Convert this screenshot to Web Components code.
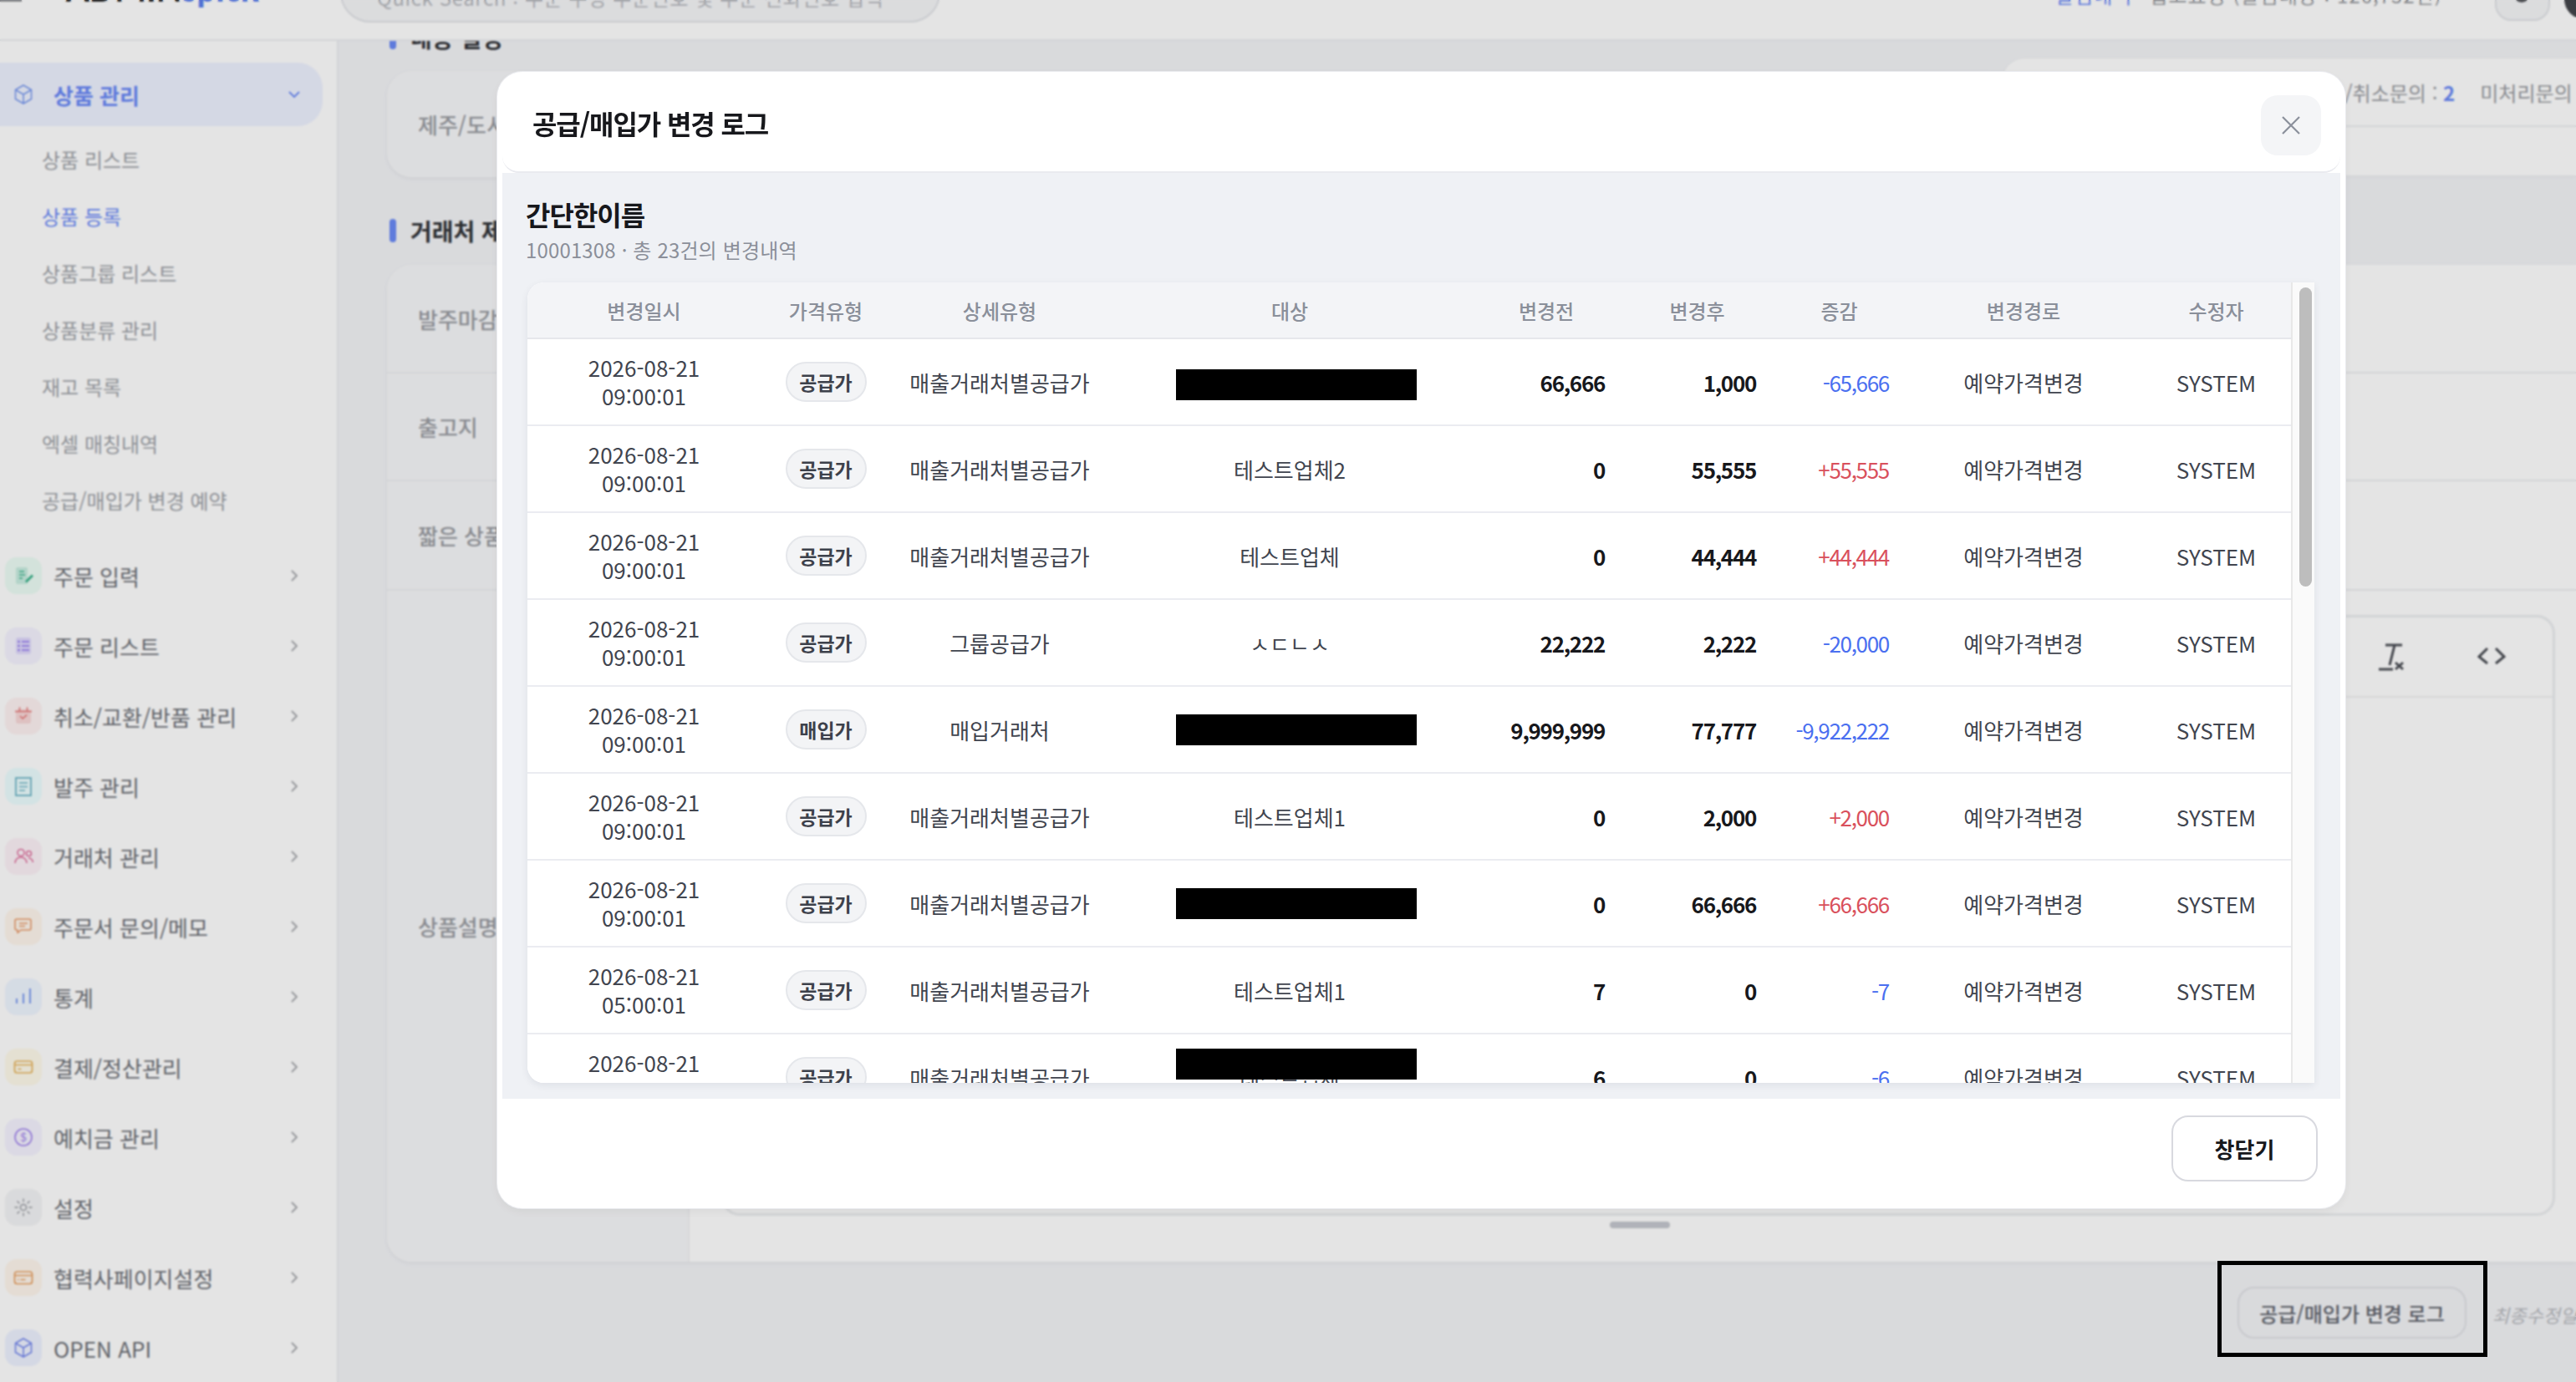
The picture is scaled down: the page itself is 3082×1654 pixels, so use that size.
<!DOCTYPE html>
<html lang="ko">
<head>
<meta charset="utf-8">
<title>공급/매입가 변경 로그</title>
<style>
    html, body {
        margin: 0;
        height: 100%;
        overflow: hidden;
        font-family: "Noto Sans CJK KR", "Noto Sans", sans-serif;
    }
</style>
</head>
<body>
<app-shell>
    <top-bar slot="top"></top-bar>
    <side-nav slot="nav"></side-nav>
    <page-main slot="main"></page-main>
    <dim-layer slot="over">
        <log-modal></log-modal>
    </dim-layer>
    <mark-box slot="over"></mark-box>
</app-shell>

<script>
const ICONS = {
    cube: `<path d="M22 11l9.5 5.5v11L22 33l-9.5-5.5v-11z M12.5 16.5L22 22l9.5-5.5 M22 22v11" fill="none" stroke="currentColor" stroke-width="1.6" stroke-linejoin="round"/>`,
    edit: `<rect x="13" y="12" width="14" height="20" rx="2" fill="currentColor" opacity=".2"/><path d="M17 17h6 M17 21h7 M17 25h4" stroke="currentColor" stroke-width="1.4"/><path d="M25 29.500l8-8" stroke="currentColor" stroke-width="3"/>`,
    list: `<rect x="13" y="12" width="18" height="20" rx="3" fill="currentColor" opacity=".2"/><path d="M20 17h9 M20 22h9 M20 27h9" stroke="currentColor" stroke-width="1.4"/><circle cx="16.500" cy="17" r="1.300" fill="currentColor"/><circle cx="16.500" cy="22" r="1.300" fill="currentColor"/><circle cx="16.500" cy="27" r="1.300" fill="currentColor"/>`,
    calendar: `<rect x="13" y="14" width="18" height="17" rx="3" fill="currentColor" opacity=".2"/><path d="M12 16.500h20 M17.500 11.500v4 M26.500 11.500v4 M18 22l3.200 3 5-4.500" fill="none" stroke="currentColor" stroke-width="1.500"/>`,
    doc: `<rect x="13" y="12" width="18" height="21" fill="none" stroke="currentColor" stroke-width="1.800"/><path d="M17 18h10 M17 22.500h10 M17 27h7" stroke="currentColor" stroke-width="1.400"/>`,
    people: `<circle cx="19" cy="17.500" r="4" fill="none" stroke="currentColor" stroke-width="1.600"/><circle cx="28.500" cy="18.500" r="3" fill="none" stroke="currentColor" stroke-width="1.600"/><path d="M12 30c.5-5 3.500-7 7-7s6.500 2 7 7 M28 24c3 0 5 2 5.500 5" fill="none" stroke="currentColor" stroke-width="1.600"/>`,
    chat: `<path d="M14 13h15a2 2 0 0 1 2 2v9a2 2 0 0 1-2 2H19l-4 3.500V26h-1a2 2 0 0 1-2-2v-9a2 2 0 0 1 2-2z" fill="none" stroke="currentColor" stroke-width="1.600" stroke-linejoin="round"/><path d="M17 18h10 M17 21.500h7" stroke="currentColor" stroke-width="1.400"/>`,
    bars: `<path d="M14 30v-6 M22 30v-12 M30 30v-18" stroke="currentColor" stroke-width="2"/>`,
    card: `<rect x="11.500" y="15" width="21" height="14" rx="3" fill="none" stroke="currentColor" stroke-width="1.700"/><path d="M11.500 19.500h21 M15.500 24.500h4" stroke="currentColor" stroke-width="1.500"/>`,
    coin: `<circle cx="22" cy="22" r="10" fill="none" stroke="currentColor" stroke-width="1.600"/><text x="22" y="27" text-anchor="middle" font-size="14" font-family="Lato, sans-serif" fill="currentColor">$</text>`,
    sun: `<circle cx="22" cy="22" r="3.600" fill="none" stroke="currentColor" stroke-width="1.500"/><path d="M22 11.500v4 M22 28.500v4 M11.500 22h4 M28.500 22h4 M14.500 14.500l2.800 2.800 M26.700 26.700l2.800 2.800 M14.500 29.500l2.800-2.800 M26.700 17.300l2.800-2.800" stroke="currentColor" stroke-width="1.400"/>`,
    bill: `<rect x="11.500" y="15" width="21" height="14.500" rx="3" fill="none" stroke="currentColor" stroke-width="1.700"/><path d="M11.500 19.500h21 M15 24.500h1.500 M18.500 24.500h6" stroke="currentColor" stroke-width="1.500"/>`
};

class AppShell extends HTMLElement {
    constructor() {
        super();
        this.shadowDOM = this.attachShadow({mode: "open"});
        this.shadowDOM.innerHTML = `
        <style>
            :host {
                display: grid;
                grid-template-columns: 405px 1fr;
                grid-template-rows: 49px 1fr;
                width: 3082px;
                height: 1654px;
                overflow: hidden;
                position: relative;
                background: #f3f4f7;
            }
            ::slotted([slot="top"]) { grid-column: 1 / 3; }
        </style>
        <slot name="top"></slot>
        <slot name="nav"></slot>
        <slot name="main"></slot>
        <slot name="over"></slot>`;
    }
}

class TopBar extends HTMLElement {
    constructor() {
        super();
        this.shadowDOM = this.attachShadow({mode: "open"});
        this.shadowDOM.innerHTML = `
        <style>
            :host {
                display: flex;
                position: relative;
                z-index: 2;
                height: 49px;
                box-sizing: border-box;
                background: #fff;
                border-bottom: 2px solid #eceef1;
                overflow: hidden;
                align-items: flex-start;
            }
            .burger { width: 26px; height: 2px; background: #8d8f94; flex: none; }
            .logo {
                margin: -37px 0 0 53px;
                width: 328px;
                flex: none;
                font: 700 40px/48px Lato, sans-serif;
                color: #222;
                white-space: nowrap;
            }
            .logo b { color: #5b7fee; }
            .search {
                flex: none;
                width: 718px;
                height: 62px;
                margin-top: -35px;
                box-sizing: border-box;
                padding: 0 42px;
                background: #f5f6f8;
                border: 2px solid #e2e4e8;
                border-radius: 0 0 36px 36px;
                font-size: 24px;
                line-height: 60px;
                letter-spacing: 0.6px;
                color: #b7b9be;
                white-space: nowrap;
                overflow: hidden;
            }
            .notice {
                flex: none;
                margin: -22px 0 0 1334px;
                width: 493px;
                font-size: 24px;
                line-height: 32px;
                letter-spacing: 1px;
                color: #9b9da2;
                white-space: nowrap;
            }
            .notice span { color: #6b8af7; margin-right: 20px; }
            .tool {
                flex: none;
                width: 66px;
                height: 62px;
                margin: -37px 0 0 33px;
                box-sizing: border-box;
                background: #f5f6f8;
                border: 2px solid #e2e4e8;
                border-radius: 20px;
                position: relative;
            }
            .tool i {
                position: absolute;
                left: 20px;
                top: 18px;
                width: 20px;
                height: 20px;
                box-sizing: border-box;
                border: 3px solid #55575c;
                border-radius: 50%;
            }
            .avatar {
                flex: none;
                width: 66px;
                height: 60px;
                margin: -37px 0 0 17px;
                background: #44454a;
                border-radius: 24px;
            }
        </style>
        <div class="burger"></div>
        <div class="logo">ADMIN<b>spick</b></div>
        <div class="search">Quick Search : 주문 수정 주문번호 및 주문 전화번호 입력</div>
        <div class="notice"><span>알림내역</span>입고요청 (알림대상 : 126,752건)</div>
        <div class="tool"><i></i></div>
        <div class="avatar"></div>`;
    }
}

class NavItem extends HTMLElement {
    constructor() {
        super();
        this.shadowDOM = this.attachShadow({mode: "open"});
    }

    connectedCallback() {
        const active = this.hasAttribute("active");
        const tint = this.getAttribute("tint");
        const ink = this.getAttribute("ink");
        this.shadowDOM.innerHTML = `
        <style>
            :host {
                display: flex;
                align-items: center;
                width: 386px;
                height: ${active ? 76 : 84}px;
                box-sizing: border-box;
                padding-left: 6px;
                border-radius: 0 30px 30px 0;
                background: ${active ? "#eef2ff" : "transparent"};
                color: ${active ? "#6b8af7" : "#6d7077"};
                font-size: 26px;
                font-weight: ${active ? 700 : 400};
            }
            .box {
                flex: none;
                width: 44px;
                height: 44px;
                margin-right: 14px;
                border-radius: 14px;
                background: ${tint};
                color: ${ink};
            }
            svg { display: block; }
            .label { flex: 1; white-space: nowrap; }
            .chev { flex: none; margin-right: 26px; color: ${active ? "#6b8af7" : "#a6a8ad"}; }
        </style>
        <div class="box"><svg width="44" height="44" viewBox="0 0 44 44">${ICONS[this.getAttribute("icon")]}</svg></div>
        <span class="label"><slot></slot></span>
        <svg class="chev" width="16" height="16" viewBox="0 0 16 16" fill="none" stroke="currentColor" stroke-width="1.800">
            <path d="${active ? "M2 5l6 6 6-6" : "M5 2l6 6-6 6"}"/>
        </svg>`;
    }
}

class SubItem extends HTMLElement {
    constructor() {
        super();
        this.shadowDOM = this.attachShadow({mode: "open"});
        this.shadowDOM.innerHTML = `
        <style>
            :host {
                display: flex;
                align-items: center;
                height: 68px;
                padding-left: 50px;
                font-size: 24px;
                color: #a0a3a9;
            }
            :host([current]) { color: #6b8af7; }
        </style>
        <slot></slot>`;
    }
}

class SideNav extends HTMLElement {
    constructor() {
        super();
        this.shadowDOM = this.attachShadow({mode: "open"});
        const subs = ["상품 리스트", "상품 등록", "상품그룹 리스트", "상품분류 관리", "재고 목록", "엑셀 매칭내역", "공급/매입가 변경 예약"];
        const items = [
            ["edit", "#ecfdf5", "#3fb58f", "주문 입력"],
            ["list", "#f5f3ff", "#8b72ee", "주문 리스트"],
            ["calendar", "#fef2f2", "#e57373", "취소/교환/반품 관리"],
            ["doc", "#ecfeff", "#6fb6c8", "발주 관리"],
            ["people", "#fdf2f8", "#e0729f", "거래처 관리"],
            ["chat", "#fff7ed", "#ea9a6a", "주문서 문의/메모"],
            ["bars", "#eff6ff", "#7c9bf0", "통계"],
            ["card", "#fffbeb", "#e8b45c", "결제/정산관리"],
            ["coin", "#f5f3ff", "#a184ee", "예치금 관리"],
            ["sun", "#f3f4f6", "#9a9ca3", "설정"],
            ["bill", "#fff7ed", "#e9a063", "협력사페이지설정"],
            ["cube", "#eef2ff", "#7689ee", "OPEN API"]
        ];
        this.shadowDOM.innerHTML = `
        <style>
            :host {
                display: block;
                background: #fff;
                border-right: 2px solid #eceef1;
                box-sizing: border-box;
                padding-top: 26px;
                overflow: hidden;
            }
            .subs { margin: 5px 0 15px; }
        </style>
        <nav-item active icon="cube" tint="#eef2ff" ink="#7b9bf0">상품 관리</nav-item>
        <div class="subs">
            ${subs.map((s, i) => `<sub-item ${i === 1 ? "current" : ""}>${s}</sub-item>`).join("")}
        </div>
        ${items.map(([icon, tint, ink, label]) =>
            `<nav-item icon="${icon}" tint="${tint}" ink="${ink}">${label}</nav-item>`).join("")}`;
    }
}

class SectionTitle extends HTMLElement {
    constructor() {
        super();
        this.shadowDOM = this.attachShadow({mode: "open"});
        this.shadowDOM.innerHTML = `
        <style>
            :host {
                display: flex;
                align-items: center;
                gap: 17px;
                height: 28px;
                margin-left: 3px;
                font-size: 28px;
                font-weight: 700;
                color: #33353a;
                white-space: nowrap;
            }
            i { width: 8px; height: 28px; border-radius: 4px; background: #6b8af7; }
        </style>
        <i></i><slot></slot>`;
    }
}

class FormRow extends HTMLElement {
    constructor() {
        super();
        this.shadowDOM = this.attachShadow({mode: "open"});
        this.shadowDOM.innerHTML = `
        <style>
            :host {
                display: grid;
                grid-template-columns: 360px 1fr;
                border-bottom: 2px solid #edeef1;
                box-sizing: border-box;
            }
            :host([last]) { border-bottom: 0; }
            .label {
                display: flex;
                align-items: center;
                padding-left: 37px;
                background: #f7f8fa;
                font-size: 26px;
                font-weight: 500;
                color: #9a9ca2;
                white-space: nowrap;
            }
            .value { background: #fff; border-left: 2px solid #f0f1f3; min-width: 0; }
        </style>
        <div class="label"><slot name="label"></slot></div>
        <div class="value"><slot></slot></div>`;
    }
}

class EditorBox extends HTMLElement {
    constructor() {
        super();
        this.shadowDOM = this.attachShadow({mode: "open"});
        this.shadowDOM.innerHTML = `
        <style>
            :host {
                display: block;
                height: 100%;
                box-sizing: border-box;
                padding: 29px 25px 0 38px;
                position: relative;
            }
            .frame {
                height: 719px;
                box-sizing: border-box;
                border: 3px solid #eceef0;
                border-radius: 22px;
                background: #fff;
            }
            .tools {
                display: flex;
                justify-content: flex-end;
                align-items: center;
                gap: 82px;
                height: 96px;
                box-sizing: border-box;
                padding-right: 55px;
                border-bottom: 2px solid #eff0f2;
                color: #4c4f56;
            }
            .grip {
                width: 72px;
                height: 8px;
                margin: 7px 0 0 1063px;
                border-radius: 4px;
                background: #c5c8cf;
            }
            svg { display: block; }
        </style>
        <div class="frame">
            <div class="tools">
                <svg width="36" height="36" viewBox="0 0 36 36" fill="none" stroke="currentColor" stroke-width="3">
                    <path d="M9 4h20 M20 4l-6 24 M1 33h17 M21 25l9 8 M30 25l-9 8"/>
                </svg>
                <svg width="36" height="36" viewBox="0 0 36 36" fill="none" stroke="currentColor" stroke-width="3">
                    <path d="M13 8L3 18l10 8 M23 8l10 10-10 8"/>
                </svg>
            </div>
        </div>
        <div class="grip"></div>`;
    }
}

class PageMain extends HTMLElement {
    constructor() {
        super();
        this.shadowDOM = this.attachShadow({mode: "open"});
        this.shadowDOM.innerHTML = `
        <style>
            :host {
                display: block;
                position: relative;
                overflow: hidden;
                background: #f3f4f7;
                min-width: 0;
            }
            .flow { margin-top: -18px; padding-left: 58px; }
            .card {
                background: #f7f8fa;
                border-radius: 30px 0 0 30px;
                box-shadow: 0 2px 6px rgba(0, 0, 0, 0.05);
                overflow: hidden;
            }
            .top { margin-top: 26px; width: 1920px; height: 127px; display: flex; align-items: center; padding-left: 37px; box-sizing: border-box; font-size: 26px; font-weight: 500; color: #9a9ca2; white-space: nowrap; }
            .second { margin-top: 50px; }
            .form { margin-top: 27px; height: 1193px; display: grid; grid-template-rows: 130px 129px 131px 1fr; }
            .strip { height: 138px; display: flex; align-items: flex-start; padding: 30px 0 0 2214px; gap: 31px; white-space: nowrap; }
            .log-btn {
                flex: none;
                width: 274px;
                height: 62px;
                box-sizing: border-box;
                display: flex;
                align-items: center;
                justify-content: center;
                border: 2px solid #e0e1e5;
                border-radius: 20px;
                background: #f3f4f7;
                font-size: 24px;
                font-weight: 500;
                color: #62656e;
            }
            .edited { font-size: 22px; line-height: 66px; font-style: italic; color: #b9bbc0; }
            .actions { display: flex; gap: 26px; margin-left: 977px; }
            .actions span { width: 208px; height: 40px; border-radius: 20px 20px 0 0; box-sizing: border-box; border: 2px solid #e2e4e8; background: #fff; }
            .actions .go { background: #6b8af7; border-color: #6b8af7; }
            .actions .warn { background: #fbe4e4; border-color: #fbe4e4; }
            .panel {
                position: absolute;
                left: 1991px;
                top: 21px;
                right: 0;
                height: 140px;
                background: #fff;
                border-radius: 26px 0 0 0;
                box-shadow: 0 1px 4px rgba(0, 0, 0, 0.05);
            }
            .panel div {
                display: flex;
                gap: 30px;
                height: 82px;
                box-sizing: border-box;
                align-items: center;
                padding-left: 365px;
                border-bottom: 2px solid #eceef1;
                font-size: 24px;
                color: #9a9ca2;
                white-space: nowrap;
            }
            .panel b { color: #6b8af7; }
        </style>
        <div class="flow">
            <section-title>내용 설정</section-title>
            <div class="card top">제주/도서 추가배송비</div>
            <section-title class="second">거래처 제공 정보</section-title>
            <div class="card form">
                <form-row><span slot="label">발주마감시간</span></form-row>
                <form-row><span slot="label">출고지</span></form-row>
                <form-row><span slot="label">짧은 상품설명</span></form-row>
                <form-row last><span slot="label">상품설명</span><editor-box></editor-box></form-row>
            </div>
            <div class="strip">
                <div class="log-btn">공급/매입가 변경 로그</div>
                <div class="edited">최종수정일시 2026-08-21</div>
            </div>
            <div class="actions"><span class="go"></span><span></span><span class="warn"></span><span></span></div>
        </div>
        <div class="panel"><div><span>교환/취소문의 : <b>2</b></span><span>미처리문의 : 0</span></div></div>`;
    }
}

class DimLayer extends HTMLElement {
    constructor() {
        super();
        this.shadowDOM = this.attachShadow({mode: "open"});
        this.shadowDOM.innerHTML = `
        <style>
            :host {
                display: block;
                position: absolute;
                inset: 0;
                z-index: 5;
                background: rgba(0, 0, 0, 0.105);
                backdrop-filter: blur(1px);
            }
        </style>
        <slot></slot>`;
    }
}

class PriceTag extends HTMLElement {
    constructor() {
        super();
        this.shadowDOM = this.attachShadow({mode: "open"});
        this.shadowDOM.innerHTML = `
        <style>
            :host {
                display: flex;
                align-items: center;
                justify-content: center;
                width: 97px;
                height: 48px;
                box-sizing: border-box;
                border: 2px solid #e5e7eb;
                border-radius: 24px;
                background: #f3f4f6;
                font-size: 23px;
                font-weight: 700;
                color: #3d414b;
            }
        </style>
        <slot></slot>`;
    }
}

class LogRow extends HTMLElement {
    constructor() {
        super();
        this.shadowDOM = this.attachShadow({mode: "open"});
    }

    set log(log) {
        this._log = log;
        this.render();
    }

    render() {
        const log = this._log;
        const tone = log.delta.startsWith("+") ? "#d9505c" : "#4a6ff0";
        this.shadowDOM.innerHTML = `
        <style>
            :host {
                display: grid;
                grid-template-columns: var(--log-columns);
                height: 104px;
                flex: none;
                box-sizing: border-box;
                border-bottom: 2px solid #ebecf1;
                background: #fff;
                font-size: 26px;
                color: #41454f;
            }
            .cell {
                display: flex;
                align-items: center;
                justify-content: center;
                text-align: center;
                white-space: nowrap;
                position: relative;
            }
            .date { line-height: 34px; }
            .num { justify-content: flex-end; padding-right: 20px; font-weight: 700; letter-spacing: -1.3px; color: #17181c; }
            .delta { font-weight: 400; color: ${tone}; }
            .hide {
                position: absolute;
                left: 81px;
                top: ${log.hideTop}px;
                width: 288px;
                height: 37px;
                background: #000;
            }
        </style>
        <div class="cell date">${log.date}<br>${log.time}</div>
        <div class="cell"><price-tag>${log.kind}</price-tag></div>
        <div class="cell">${log.detail}</div>
        <div class="cell">${log.target}${log.hideTop !== undefined ? `<span class="hide"></span>` : ""}</div>
        <div class="cell num">${log.before}</div>
        <div class="cell num">${log.after}</div>
        <div class="cell num delta">${log.delta}</div>
        <div class="cell">예약가격변경</div>
        <div class="cell">SYSTEM</div>`;
    }
}

class LogTable extends HTMLElement {
    constructor() {
        super();
        this.shadowDOM = this.attachShadow({mode: "open"});
        const heads = ["변경일시", "가격유형", "상세유형", "대상", "변경전", "변경후", "증감", "변경경로", "수정자"];
        this.shadowDOM.innerHTML = `
        <style>
            :host {
                --log-columns: 279px 156px 260px 434px 180px 181px 159px 282px 179px;
                display: flex;
                flex: 1;
                min-height: 0;
                border-radius: 20px 0 0 20px;
                box-shadow: 0 3px 10px rgba(30, 40, 70, 0.08);
                overflow: hidden;
                background: #fff;
            }
            .scroll { flex: none; width: 2110px; display: flex; flex-direction: column; overflow: hidden; }
            .head {
                flex: none;
                display: grid;
                grid-template-columns: var(--log-columns);
                height: 68px;
                box-sizing: border-box;
                border-bottom: 2px solid #e6e7ec;
                background: #f3f4f7;
                font-size: 24px;
                font-weight: 500;
                color: #8a8f9a;
            }
            .head span { display: flex; align-items: center; justify-content: center; }
            .gutter {
                flex: 1;
                box-sizing: border-box;
                padding: 6px 4px 0 8px;
                background: #fafafa;
                border-left: 2px solid #e8e8e8;
            }
            .thumb { width: 15px; height: 358px; border-radius: 8px; background: #bdbdbd; }
        </style>
        <div class="scroll">
            <div class="head">${heads.map(h => `<span>${h}</span>`).join("")}</div>
            <div id="rows"></div>
        </div>
        <div class="gutter"><div class="thumb"></div></div>`;
    }

    set logs(logs) {
        const rows = this.shadowDOM.getElementById("rows");
        logs.forEach(log => {
            const row = document.createElement("log-row");
            row.log = log;
            rows.appendChild(row);
        });
    }
}

class LogModal extends HTMLElement {
    constructor() {
        super();
        this.shadowDOM = this.attachShadow({mode: "open"});
        this.shadowDOM.innerHTML = `
        <style>
            :host {
                display: flex;
                flex-direction: column;
                position: absolute;
                left: 595px;
                top: 86px;
                width: 2211px;
                height: 1360px;
                box-sizing: border-box;
                background: #fff;
                border-radius: 30px;
                box-shadow: 0 0 0 1px #eaebef, 0 4px 14px rgba(0, 0, 0, 0.06);
                overflow: hidden;
            }
            header {
                flex: none;
                height: 121px;
                box-sizing: border-box;
                margin: 0 6px;
                padding: 0 23px 0 36px;
                display: flex;
                align-items: center;
                justify-content: space-between;
                border-bottom: 2px solid #e9eaef;
                border-radius: 0 0 20px 20px;
            }
            h1 {
                margin: 3px 0 0;
                font-size: 32px;
                font-weight: 700;
                letter-spacing: -1.1px;
                color: #17181c;
            }
            .close {
                display: flex;
                align-items: center;
                justify-content: center;
                width: 72px;
                height: 72px;
                margin-top: 8px;
                border-radius: 20px;
                background: #f4f5f7;
                color: #8b909b;
            }
            .body {
                flex: 1;
                min-height: 0;
                margin: 0 6px;
                padding: 29px 31px 19px 30px;
                display: flex;
                flex-direction: column;
                background: #eff1f5;
            }
            h2 {
                margin: 0 0 0 -2px;
                font-size: 32px;
                line-height: 40px;
                font-weight: 700;
                letter-spacing: -1px;
                color: #17181c;
            }
            .meta {
                margin: 7px 0 23px -2px;
                font-size: 24px;
                line-height: 32px;
                letter-spacing: 0.15px;
                color: #8b8f99;
            }
            footer {
                flex: none;
                height: 131px;
                box-sizing: border-box;
                padding: 20px 33px 0 0;
                display: flex;
                justify-content: flex-end;
                align-items: flex-start;
            }
            .done {
                display: flex;
                align-items: center;
                justify-content: center;
                width: 175px;
                height: 79px;
                box-sizing: border-box;
                border: 2px solid #d8d9df;
                border-radius: 20px;
                background: #fff;
                font-size: 26px;
                font-weight: 700;
                color: #17181c;
            }
        </style>
        <header>
            <h1>공급/매입가 변경 로그</h1>
            <div class="close">
                <svg width="24" height="24" viewBox="0 0 24 24" fill="none" stroke="currentColor" stroke-width="2.200">
                    <path d="M2 2l20 20 M22 2L2 22"/>
                </svg>
            </div>
        </header>
        <div class="body">
            <h2>간단한이름</h2>
            <div class="meta">10001308 · 총 23건의 변경내역</div>
            <log-table></log-table>
        </div>
        <footer><div class="done">창닫기</div></footer>`;
    }

    connectedCallback() {
        const supply = "매출거래처별공급가";
        const row = (time, kind, detail, target, before, after, delta, extra) =>
            ({date: "2026-08-21", time, kind, detail, target, before, after, delta, ...extra});
        this.shadowDOM.querySelector("log-table").logs = [
            row("09:00:01", "공급가", supply, "테스트업체", "66,666", "1,000", "-65,666", {hideTop: 36}),
            row("09:00:01", "공급가", supply, "테스트업체2", "0", "55,555", "+55,555"),
            row("09:00:01", "공급가", supply, "테스트업체", "0", "44,444", "+44,444"),
            row("09:00:01", "공급가", "그룹공급가", "ㅅㄷㄴㅅ", "22,222", "2,222", "-20,000"),
            row("09:00:01", "매입가", "매입거래처", "테스트업체", "9,999,999", "77,777", "-9,922,222", {hideTop: 33}),
            row("09:00:01", "공급가", supply, "테스트업체1", "0", "2,000", "+2,000"),
            row("09:00:01", "공급가", supply, "테스트업체", "0", "66,666", "+66,666", {hideTop: 33}),
            row("05:00:01", "공급가", supply, "테스트업체1", "7", "0", "-7"),
            row("05:00:01", "공급가", supply, "테스트업체", "6", "0", "-6", {hideTop: 17})
        ];
    }
}

class MarkBox extends HTMLElement {
    constructor() {
        super();
        this.shadowDOM = this.attachShadow({mode: "open"});
        this.shadowDOM.innerHTML = `
        <style>
            :host {
                display: block;
                position: absolute;
                left: 2653px;
                top: 1509px;
                width: 323px;
                height: 115px;
                box-sizing: border-box;
                border: 5px solid #000;
                z-index: 6;
            }
        </style>`;
    }
}

customElements.define("app-shell", AppShell);
customElements.define("top-bar", TopBar);
customElements.define("nav-item", NavItem);
customElements.define("sub-item", SubItem);
customElements.define("side-nav", SideNav);
customElements.define("section-title", SectionTitle);
customElements.define("form-row", FormRow);
customElements.define("editor-box", EditorBox);
customElements.define("page-main", PageMain);
customElements.define("dim-layer", DimLayer);
customElements.define("price-tag", PriceTag);
customElements.define("log-row", LogRow);
customElements.define("log-table", LogTable);
customElements.define("log-modal", LogModal);
customElements.define("mark-box", MarkBox);
</script>
</body>
</html>
